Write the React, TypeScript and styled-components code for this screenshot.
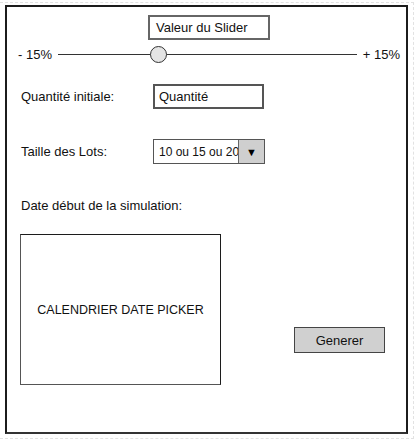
import styled, { createGlobalStyle } from 'styled-components'

const GlobalStyle = createGlobalStyle`
  html, body {
    margin: 0;
    padding: 0;
    background: #ffffff;
  }
  body {
    font-family: "Comic Sans MS", "Liberation Sans", Arial, sans-serif;
    font-size: 13px;
    color: #111111;
  }
`

const Canvas = styled.div`
  box-sizing: border-box;
  width: 414px;
  height: 437px;
  margin-top: 2px;
  border-top: 1px dashed #e2e2e2;
  border-right: 1px dashed #e2e2e2;
  border-bottom: 1px dashed #e2e2e2;
  padding: 2px 0 0 5px;
`

const Panel = styled.div`
  box-sizing: border-box;
  width: 403px;
  height: 429px;
  border: 2px solid #1c1c1c;
  border-bottom-color: #333;
  display: flex;
  flex-direction: column;
`

const ValueBox = styled.div`
  box-sizing: border-box;
  width: 122px;
  height: 25px;
  margin: 8px 0 0 141px;
  border: 2px solid #666;
  padding: 0 0 0 6px;
  display: flex;
  align-items: center;
`

const SliderRow = styled.div`
  display: flex;
  align-items: center;
  height: 16px;
  margin-top: 6px;
  padding: 0 6px 0 11px;
  gap: 6px;
`

const SliderTrack = styled.div`
  position: relative;
  flex: 1;
  height: 1px;
  background: #333;
`

const Knob = styled.div<{ pos: number }>`
  position: absolute;
  top: -8px;
  left: ${({ pos }) => pos}px;
  box-sizing: border-box;
  width: 17px;
  height: 17px;
  border-radius: 50%;
  border: 1.5px solid #333;
  background: #e4e4e4;
`

const FieldRow = styled.div<{ top: number }>`
  display: flex;
  align-items: center;
  margin-top: ${({ top }) => top}px;
  padding-left: 14px;
`

const Label = styled.div`
  width: 132px;
`

const TextInput = styled.div`
  box-sizing: border-box;
  width: 111px;
  height: 25px;
  border: 2px solid #555;
  padding-left: 4px;
  display: flex;
  align-items: center;
`

const Select = styled.div`
  box-sizing: border-box;
  width: 112px;
  height: 25px;
  border: 1.5px solid #555;
  display: flex;
`

const SelectText = styled.div`
  flex: 1;
  display: flex;
  align-items: center;
  padding-left: 5px;
  font-family: "Liberation Sans", Arial, sans-serif;
  font-size: 12px;
  white-space: nowrap;
  overflow: hidden;
`

const SelectArrow = styled.div`
  width: 25px;
  border-left: 1px solid #666;
  background: #cfcfcf;
  display: flex;
  align-items: center;
  justify-content: center;
  font-size: 11px;
  color: #000;
`

const SectionLabel = styled.div`
  margin: 34px 0 0 14px;
  line-height: 16px;
`

const BottomRow = styled.div`
  display: flex;
  align-items: flex-start;
  margin: 20px 0 0 13px;
`

const Calendar = styled.div`
  box-sizing: border-box;
  width: 201px;
  height: 151px;
  border: 1.5px solid #1c1c1c;
  border-bottom-color: #555;
  border-left-color: #555;
  display: flex;
  align-items: center;
  justify-content: center;
  font-size: 12.5px;
`

const Button = styled.div`
  box-sizing: border-box;
  width: 91px;
  height: 26px;
  margin: 93px 0 0 73px;
  border: 1.5px solid #444;
  background: #d0d0d0;
  display: flex;
  align-items: center;
  justify-content: center;
`

export default function App() {
  return (
    <>
      <GlobalStyle />
      <Canvas>
        <Panel>
          <ValueBox>Valeur du Slider</ValueBox>
          <SliderRow>
            <span>- 15%</span>
            <SliderTrack>
              <Knob pos={92} />
            </SliderTrack>
            <span>+ 15%</span>
          </SliderRow>
          <FieldRow top={22}>
            <Label>Quantité initiale:</Label>
            <TextInput>Quantité</TextInput>
          </FieldRow>
          <FieldRow top={30}>
            <Label>Taille des Lots:</Label>
            <Select>
              <SelectText>10 ou 15 ou 20</SelectText>
              <SelectArrow>▼</SelectArrow>
            </Select>
          </FieldRow>
          <SectionLabel>Date début de la simulation:</SectionLabel>
          <BottomRow>
            <Calendar>CALENDRIER DATE PICKER</Calendar>
            <Button>Generer</Button>
          </BottomRow>
        </Panel>
      </Canvas>
    </>
  )
}
